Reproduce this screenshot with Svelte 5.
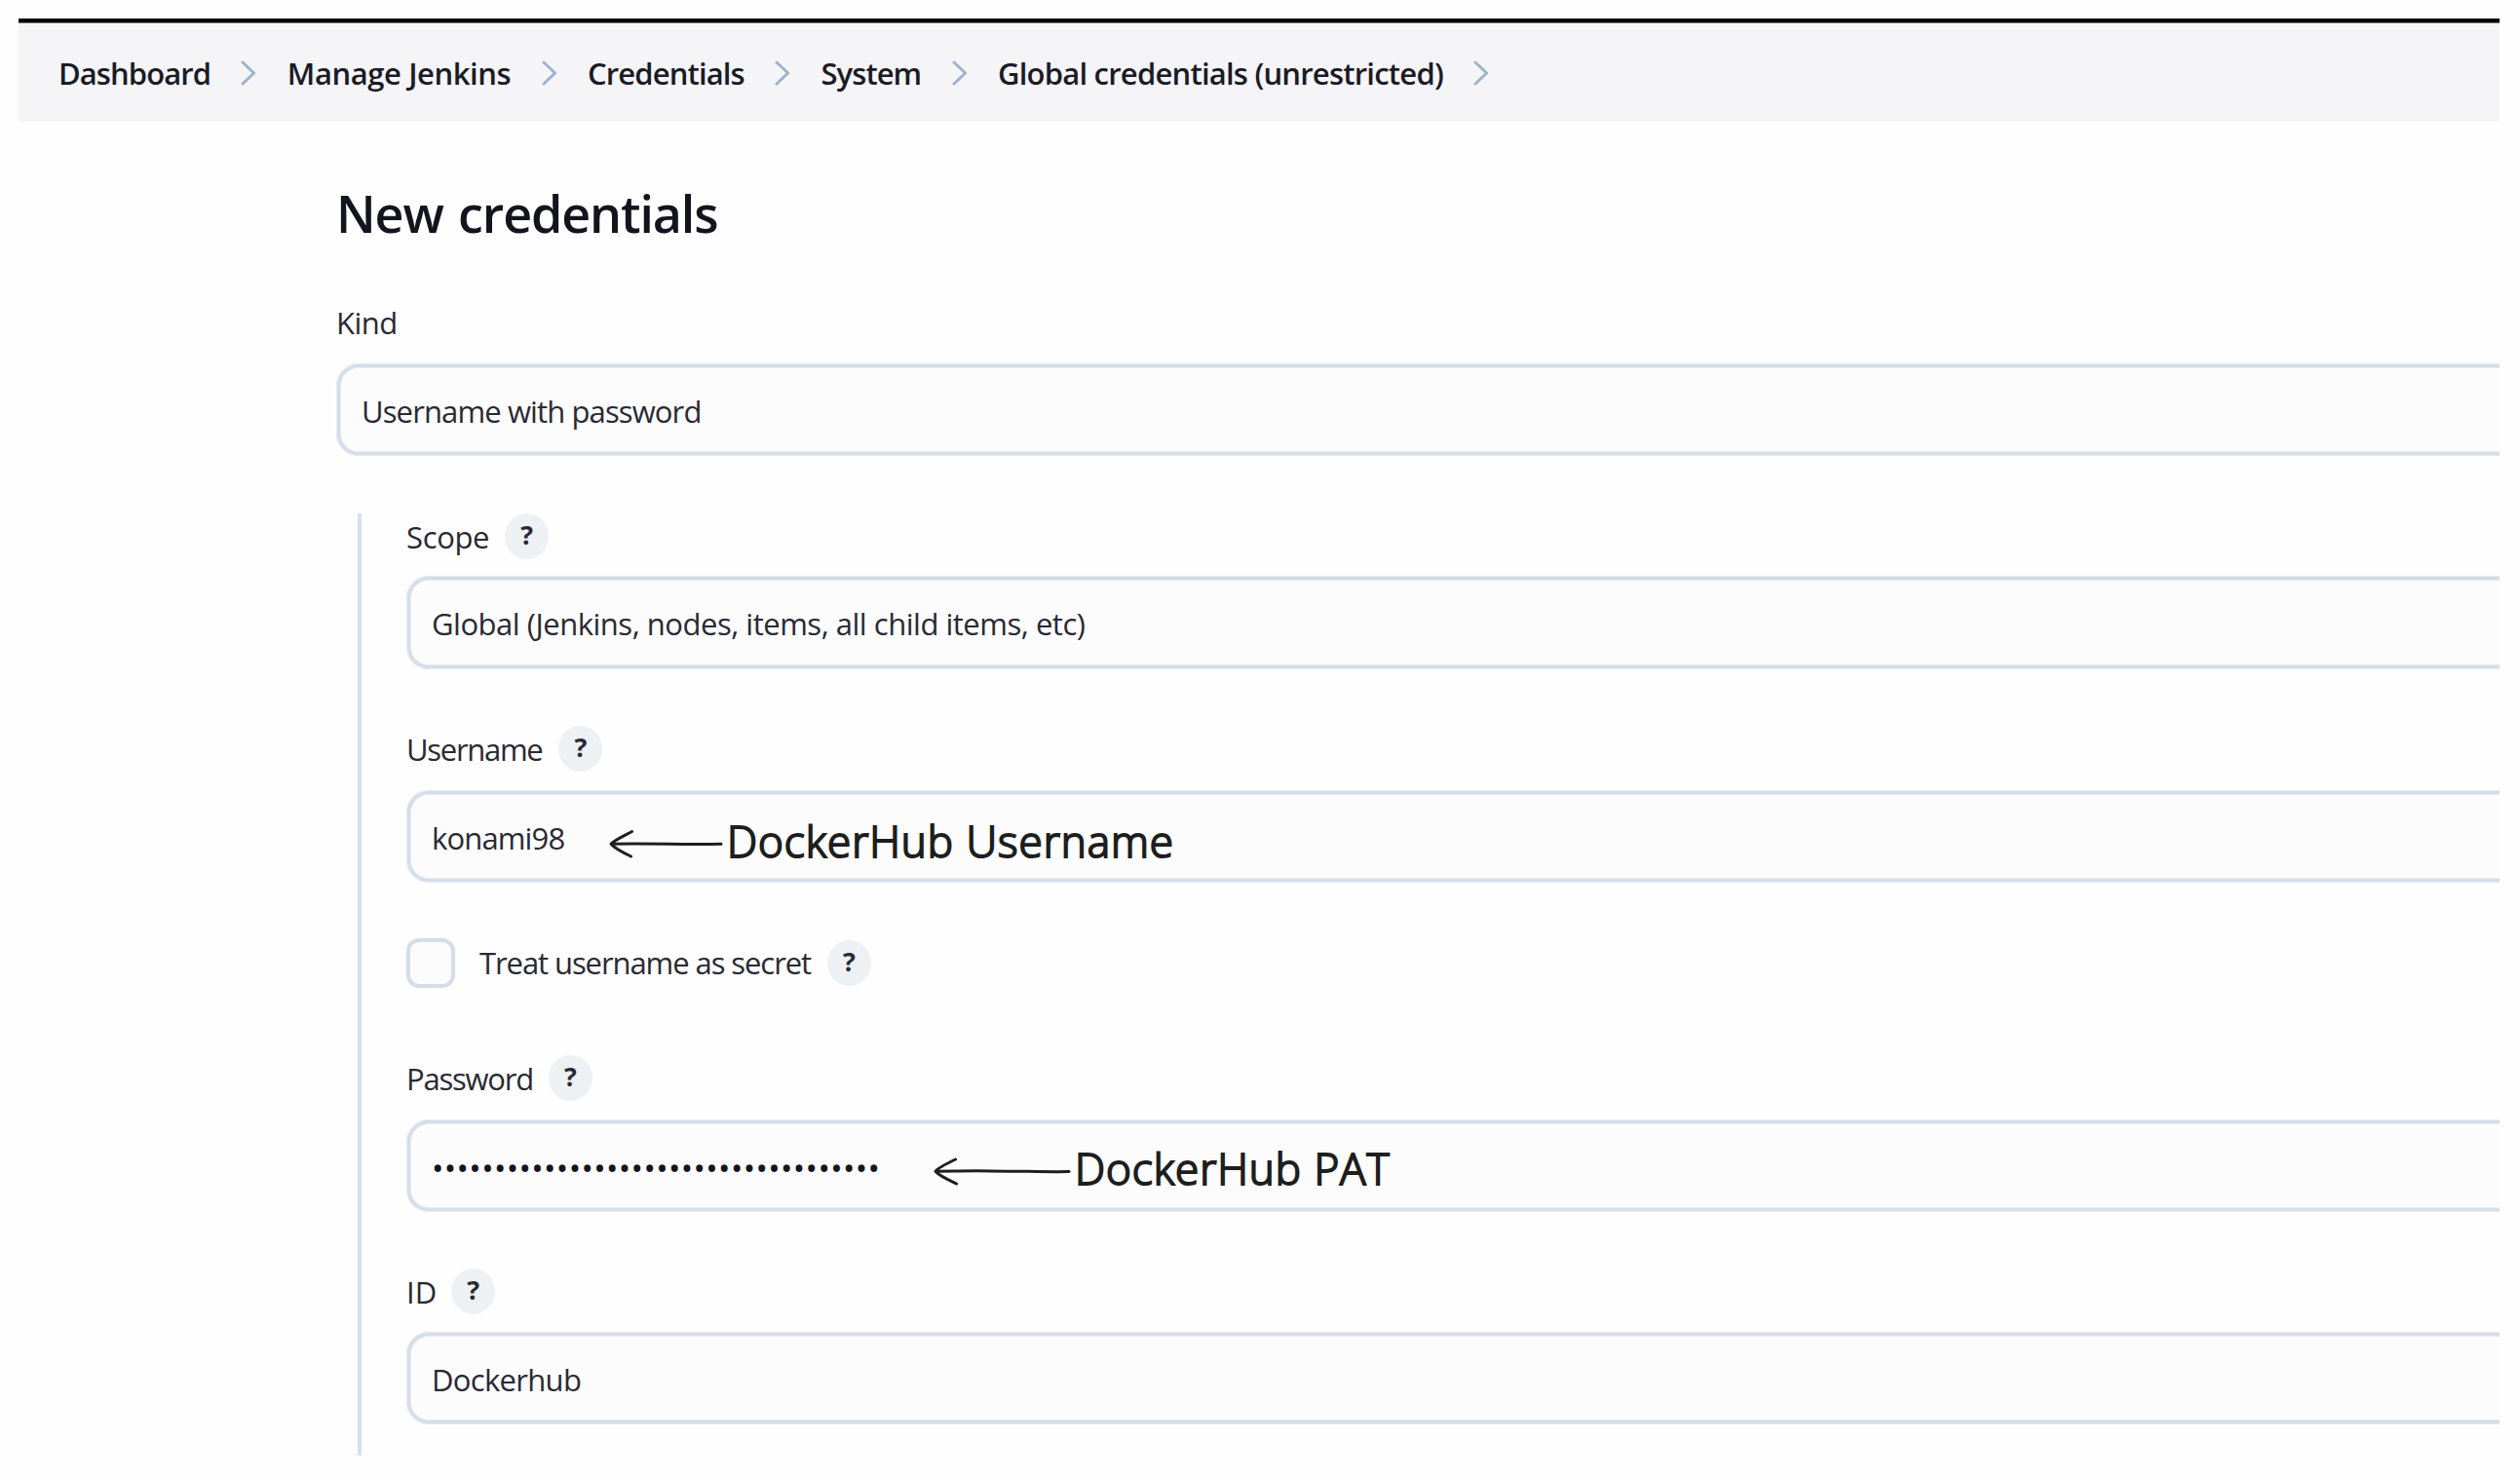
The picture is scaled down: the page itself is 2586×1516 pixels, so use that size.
<script>
  const crumbs = [
    { text: 'Dashboard', tracking: -0.93 },
    { text: 'Manage Jenkins', tracking: -0.42 },
    { text: 'Credentials', tracking: -0.88 },
    { text: 'System', tracking: -0.95 },
    { text: 'Global credentials (unrestricted)', tracking: -0.78 },
  ];
  const secret = '•'.repeat(36);
</script>

{#snippet help()}
  <button class="help" type="button" aria-label="Help"><span>?</span></button>
{/snippet}

{#snippet txt(text, tracking)}
  <span class="txt" style:letter-spacing="{tracking}px">{text}</span>
{/snippet}

<div class="page">
  <nav class="crumbs">
    {#each crumbs as crumb}
      {@render txt(crumb.text, crumb.tracking)}
      <svg class="chevron" viewBox="0 0 16 26" aria-hidden="true"><path d="M2 2 L13.6 13 L2 24" /></svg>
    {/each}
  </nav>

  <main>
    <h1>New credentials</h1>

    <div class="field kind">
      <div class="label">{@render txt('Kind', -0.5)}</div>
      <div class="control">{@render txt('Username with password', -0.88)}</div>
    </div>

    <section class="group">
      <div class="field scope">
        <div class="label">{@render txt('Scope', -0.35)}{@render help()}</div>
        <div class="control">{@render txt('Global (Jenkins, nodes, items, all child items, etc)', -0.48)}</div>
      </div>

      <div class="field user-field">
        <div class="label">{@render txt('Username', -1.3)}{@render help()}</div>
        <div class="control">
          {@render txt('konami98', -0.85)}
          <div class="note user">
            <svg width="118" height="30" viewBox="0 0 118 30" aria-hidden="true">
              <path d="M115 15.3 C80 16 40 14.6 2 15.3 M23.5 2.5 C15 7 5 11.5 2 15.3 C6 20 15 24.500 22.500 28" />
            </svg>
            <span>DockerHub Username</span>
          </div>
        </div>
      </div>

      <div class="check">
        <span class="box"></span>
        {@render txt('Treat username as secret', -1.08)}
        {@render help()}
      </div>

      <div class="field">
        <div class="label">{@render txt('Password', -1.22)}{@render help()}</div>
        <div class="control">
          <span class="secret">{secret}</span>
          <div class="note pat">
            <svg width="142" height="30" viewBox="0 0 142 30" aria-hidden="true">
              <path d="M139 15.500 C110 16.300 70 13.800 2 15.300 M22.500 3 C13 7.500 4 12 2 15.300 C6 20 15 24 23.500 28" />
            </svg>
            <span>DockerHub PAT</span>
          </div>
        </div>
      </div>

      <div class="field id">
        <div class="label">{@render txt('ID', 0)}{@render help()}</div>
        <div class="control">{@render txt('Dockerhub', -0.68)}</div>
      </div>
    </section>
  </main>
</div>

<style>
  :global(body) {
    margin: 0;
    background: #fefefe;
  }
  .page {
    box-sizing: border-box;
    width: 2546px;
    height: 1476px;
    margin: 19px 0 0 19px;
    overflow: hidden;
    background: #fefefe;
    color: #292933;
    font: 400 31px/46px 'Open Sans', 'Noto Sans', sans-serif;
  }
  .txt {
    white-space: nowrap;
  }
  .crumbs {
    box-sizing: border-box;
    display: flex;
    align-items: center;
    gap: 31.4px;
    height: 106px;
    padding: 2px 0 0 41px;
    border-top: 4px solid #000;
    box-shadow: inset 0 1px 0 #7b7b7c;
    background: #f5f5f8;
    color: #1b1b26;
    font-weight: 600;
  }
  .chevron {
    flex: none;
    width: 16px;
    height: 26px;
    fill: none;
    stroke: #9db3cd;
    stroke-width: 3;
    stroke-linecap: round;
    stroke-linejoin: round;
  }
  main {
    padding: 59px 0 0 326px;
  }
  h1 {
    margin: 0 0 53px;
    color: #14141f;
    font-size: 52px;
    line-height: 70px;
    font-weight: 600;
    letter-spacing: -1.12px;
    word-spacing: 3px;
  }
  .field {
    margin-bottom: 58px;
  }
  .label {
    display: flex;
    align-items: center;
    gap: 16px;
    height: 47px;
    margin-bottom: 19px;
  }
  .label .txt {
    padding-top: 1px;
  }
  .control {
    position: relative;
    box-sizing: border-box;
    display: flex;
    align-items: center;
    width: calc(100% + 40px);
    height: 95px;
    padding: 2px 26px 0;
    border-radius: 23px;
    background: #fcfcfd;
    box-shadow:
      inset 0 0 0 1px #e8ecf2,
      inset 0 0 0 4px #d5dde8,
      inset 0 0 0 5px #e8ecf2;
  }
  .kind {
    margin-bottom: 60px;
  }
  .group {
    height: 967px;
    margin-left: 22px;
    padding-left: 46px;
    border-left: 4px solid #d8e0ea;
  }
  .scope .label {
    margin-bottom: 17px;
    margin-top: -1px;
  }
  .scope .control {
    height: 96px;
  }
  .user-field .label {
    gap: 17px;
  }
  .id .label {
    gap: 15px;
    margin-bottom: 18px;
  }
  .help {
    flex: none;
    display: grid;
    place-items: center;
    width: 45px;
    height: 47px;
    padding: 0;
    border: 0;
    border-radius: 50%;
    background: #edf1f4;
    color: #2a2a35;
    font: 700 27px/40px 'Open Sans', sans-serif;
  }
  .help span {
    padding-bottom: 3px;
  }
  .check {
    display: flex;
    align-items: center;
    height: 51px;
    margin: -1px 0 69px;
  }
  .box {
    box-sizing: border-box;
    width: 50px;
    height: 51px;
    margin-right: 25px;
    border: 4px solid #d5dde8;
    border-radius: 13px;
    background: #fcfcfd;
  }
  .check .txt {
    padding-bottom: 2px;
    margin-right: 17px;
  }
  .secret {
    padding-top: 2px;
    color: #14141f;
    font-size: 33px;
    letter-spacing: 0.38px;
  }
  .note {
    position: absolute;
    display: flex;
    align-items: center;
    height: 60px;
    color: #1e1e1e;
    font-size: 44px;
    line-height: 60px;
    font-weight: 300;
    letter-spacing: 0.98px;
    white-space: nowrap;
    -webkit-text-stroke: 2px #1e1e1e;
    stroke-linejoin: round;
  }
  .note svg {
    flex: none;
    margin-top: 6px;
    fill: none;
    stroke: #1e1e1e;
    stroke-width: 3;
    stroke-linecap: round;
  }
  .user {
    top: 22px;
    left: 208px;
    gap: 3px;
  }
  .pat {
    top: 20px;
    left: 541px;
    gap: 3px;
  }
</style>
